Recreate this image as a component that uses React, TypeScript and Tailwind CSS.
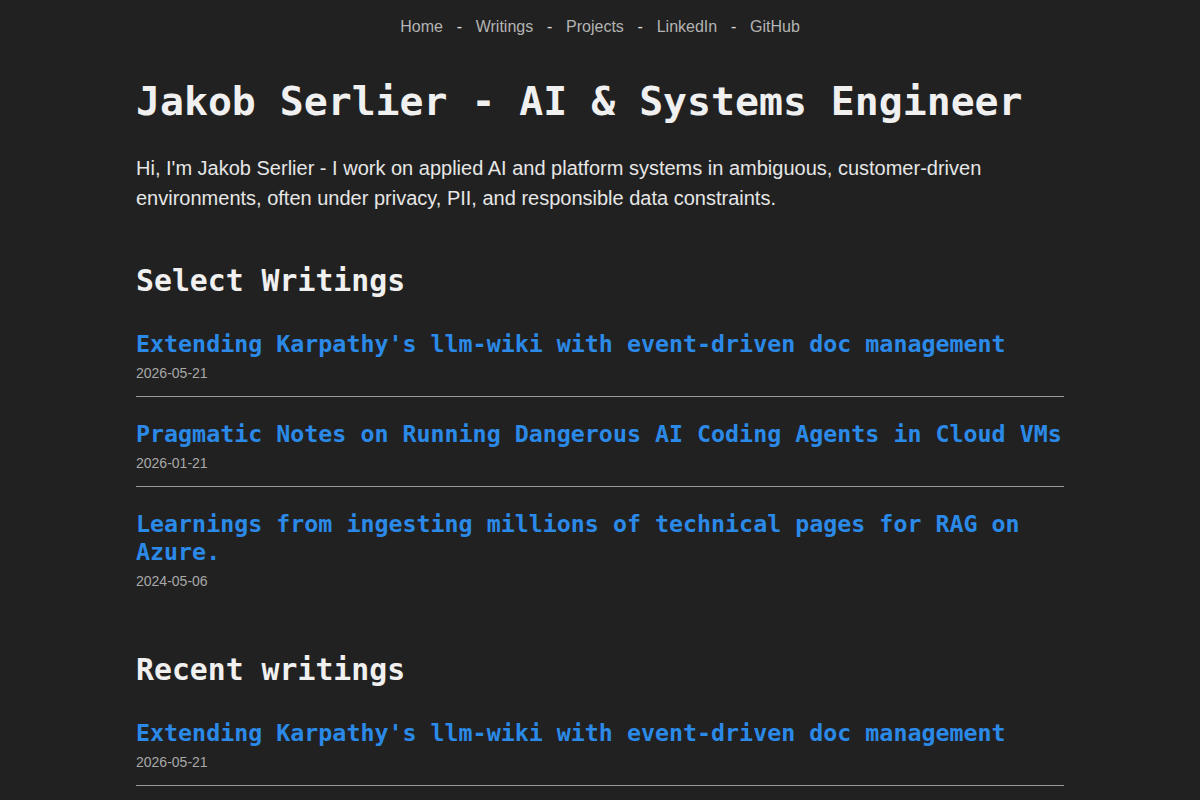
import React from "react";

const mono = { fontFamily: '"DejaVu Sans Mono", "Liberation Mono", monospace' };

type Item = { title: string; date: string };

const selected: Item[] = [
  { title: "Extending Karpathy's llm-wiki with event-driven doc management", date: "2026-05-21" },
  { title: "Pragmatic Notes on Running Dangerous AI Coding Agents in Cloud VMs", date: "2026-01-21" },
  { title: "Learnings from ingesting millions of technical pages for RAG on Azure.", date: "2024-05-06" },
];

const recent: Item[] = [
  { title: "Extending Karpathy's llm-wiki with event-driven doc management", date: "2026-05-21" },
  { title: "Pragmatic Notes on Running Dangerous AI Coding Agents in Cloud VMs", date: "2026-01-21" },
];

function List({ items }: { items: Item[] }) {
  return (
    <div>
      {items.map((it, i) => (
        <div key={i}>
          <a
            href="#"
            className="block text-[23.3px] leading-[28px] font-semibold text-[#2b8ae8]"
            style={mono}
          >
            {it.title}
          </a>
          <div className="mt-[5px] text-[14px] leading-[20px] text-[#a8a8a8]">{it.date}</div>
          {i < items.length - 1 && <hr className="mt-[13px] mb-[23px] border-0 border-t border-[#9a9a9a]" />}
        </div>
      ))}
    </div>
  );
}

export default function App() {
  const links = ["Home", "Writings", "Projects", "LinkedIn", "GitHub"];
  return (
    <div
      className="min-h-screen bg-[#212121] text-[#ececec]"
      style={{ fontFamily: '"Liberation Sans", Arial, sans-serif' }}
    >
      <nav className="flex justify-center items-center pt-[15px] text-[16px] leading-[24px] text-[#b4b4b4]">
        {links.map((l, i) => (
          <React.Fragment key={l}>
            {i > 0 && <span className="mx-[13.75px] text-[#e0e0e0]">-</span>}
            <a href="#">{l}</a>
          </React.Fragment>
        ))}
      </nav>
      <main className="mx-auto w-[928px] pb-10">
        <h1 className="mt-[38px] text-[39.8px] leading-[48px] font-semibold text-[#f0f0f0]" style={mono}>
          Jakob Serlier - AI &amp; Systems Engineer
        </h1>
        <p className="mt-[28px] text-[20px] leading-[30px] text-[#e6e6e6]">
          Hi, I'm Jakob Serlier - I work on applied AI and platform systems in ambiguous, customer-driven
          environments, often under privacy, PII, and responsible data constraints.
        </p>
        <h2 className="mt-[50px] text-[29.8px] leading-[36px] font-semibold text-[#f0f0f0]" style={mono}>
          Select Writings
        </h2>
        <div className="mt-[31px]">
          <List items={selected} />
        </div>
        <h2 className="mt-[61px] text-[29.8px] leading-[36px] font-semibold text-[#f0f0f0]" style={mono}>
          Recent writings
        </h2>
        <div className="mt-[31px]">
          <List items={recent} />
        </div>
      </main>
    </div>
  );
}
